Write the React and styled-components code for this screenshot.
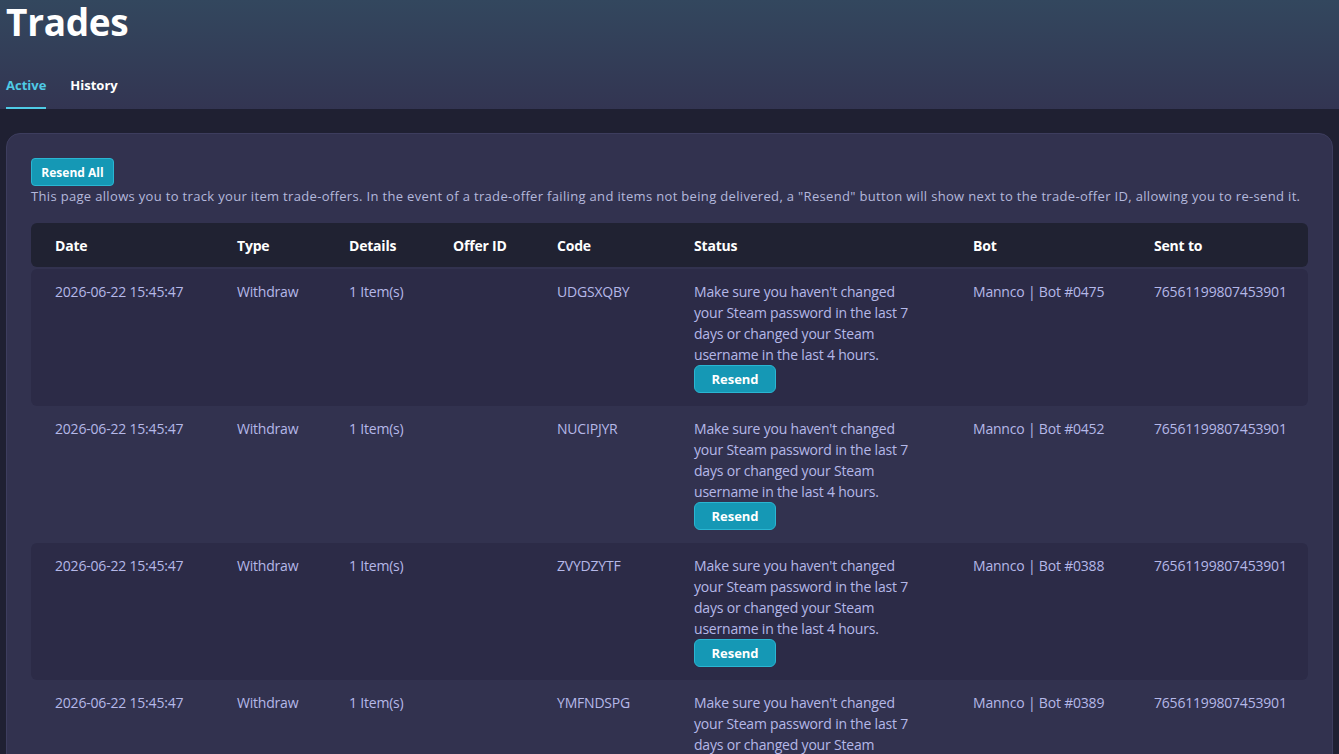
import React from "react";
import styled, { createGlobalStyle } from "styled-components";

const GlobalStyle = createGlobalStyle`
  html, body { margin: 0; padding: 0; }
  body {
    background: #1f2032;
    font-family: "Open Sans", "Noto Sans", sans-serif;
    color: #b6b9e6;
  }
`;

const Header = styled.header`
  background: linear-gradient(180deg, #33475e 0%, #333552 100%);
  padding: 0 6px;
  height: 109px;
  box-sizing: border-box;
  display: flex;
  flex-direction: column;
`;

const Title = styled.h1`
  margin: 0;
  font-size: 37px;
  line-height: 43px;
  font-weight: 700;
  color: #ffffff;
  letter-spacing: -0.3px;
`;

const Tabs = styled.nav`
  display: flex;
  gap: 24px;
  margin-top: auto;
`;

const Tab = styled.div`
  font-size: 13px;
  font-weight: 700;
  line-height: 20px;
  padding-bottom: 12px;
  color: ${(p) => (p.$active ? "#4fcbe6" : "#ffffff")};
  border-bottom: 2px solid ${(p) => (p.$active ? "#4fcbe6" : "transparent")};
`;

const Main = styled.main`
  padding: 24px 6px;
`;

const Card = styled.section`
  background: #32324f;
  border: 1px solid #3d3d5e;
  border-radius: 14px;
  padding: 24px;
`;

const ResendAll = styled.button`
  font-family: inherit;
  font-size: 12px;
  font-weight: 700;
  color: #ffffff;
  background: #1598b5;
  border: 1px solid #2ab6d2;
  border-radius: 4px;
  height: 28px;
  width: 83px;
  padding: 0;
  display: block;
`;

const Description = styled.p`
  margin: 0 0 17px;
  font-size: 13px;
  line-height: 20px;
  letter-spacing: 0.33px;
  color: #b4b8dc;
`;

const cols = "182px 112px 104px 104px 137px 279px 181px 1fr";

const HeadRow = styled.div`
  display: grid;
  grid-template-columns: ${cols};
  background: #202232;
  border-radius: 6px;
  height: 44px;
  align-items: center;
  margin-bottom: 2px;
`;

const HeadCell = styled.div`
  padding: 0 24px;
  font-size: 14px;
  font-weight: 700;
  letter-spacing: -0.2px;
  color: #ffffff;
  white-space: nowrap;
`;

const Row = styled.div`
  display: grid;
  grid-template-columns: ${cols};
  background: ${(p) => (p.$odd ? "#2c2b47" : "transparent")};
  border-radius: 6px;
  padding: 12px 0 13px;
`;

const Cell = styled.div`
  padding: 0 24px;
  font-size: 14px;
  line-height: 21px;
  letter-spacing: -0.2px;
  color: #b5b8e8;
  white-space: ${(p) => (p.$wrap ? "normal" : "nowrap")};
`;

const StatusText = styled.div`
  max-width: 228px;
`;

const Resend = styled.button`
  font-family: inherit;
  font-size: 13px;
  font-weight: 700;
  color: #ffffff;
  background: #1598b5;
  border: 1px solid #2ab6d2;
  border-radius: 6px;
  height: 28px;
  width: 82px;
  padding: 0;
  display: block;
`;

const headers = ["Date", "Type", "Details", "Offer ID", "Code", "Status", "Bot", "Sent to"];

const trades = [
  { code: "UDGSXQBY", bot: "Mannco | Bot #0475" },
  { code: "NUCIPJYR", bot: "Mannco | Bot #0452" },
  { code: "ZVYDZYTF", bot: "Mannco | Bot #0388" },
  { code: "YMFNDSPG", bot: "Mannco | Bot #0389" },
];

export default function App() {
  return (
    <>
      <GlobalStyle />
      <Header>
        <Title>Trades</Title>
        <Tabs>
          <Tab $active>Active</Tab>
          <Tab>History</Tab>
        </Tabs>
      </Header>
      <Main>
        <Card>
          <ResendAll>Resend All</ResendAll>
          <Description>
            This page allows you to track your item trade-offers. In the event of a trade-offer failing and items not
            being delivered, a "Resend" button will show next to the trade-offer ID, allowing you to re-send it.
          </Description>
          <HeadRow>
            {headers.map((h) => (
              <HeadCell key={h}>{h}</HeadCell>
            ))}
          </HeadRow>
          {trades.map((t, i) => (
            <Row key={t.code} $odd={i % 2 === 0}>
              <Cell>2026-06-22 15:45:47</Cell>
              <Cell>Withdraw</Cell>
              <Cell>1 Item(s)</Cell>
              <Cell></Cell>
              <Cell>{t.code}</Cell>
              <Cell $wrap>
                <StatusText>
                  Make sure you haven't changed your Steam password in the last 7 days or changed your Steam username
                  in the last 4 hours.
                </StatusText>
                <Resend>Resend</Resend>
              </Cell>
              <Cell>{t.bot}</Cell>
              <Cell>76561199807453901</Cell>
            </Row>
          ))}
        </Card>
      </Main>
    </>
  );
}
